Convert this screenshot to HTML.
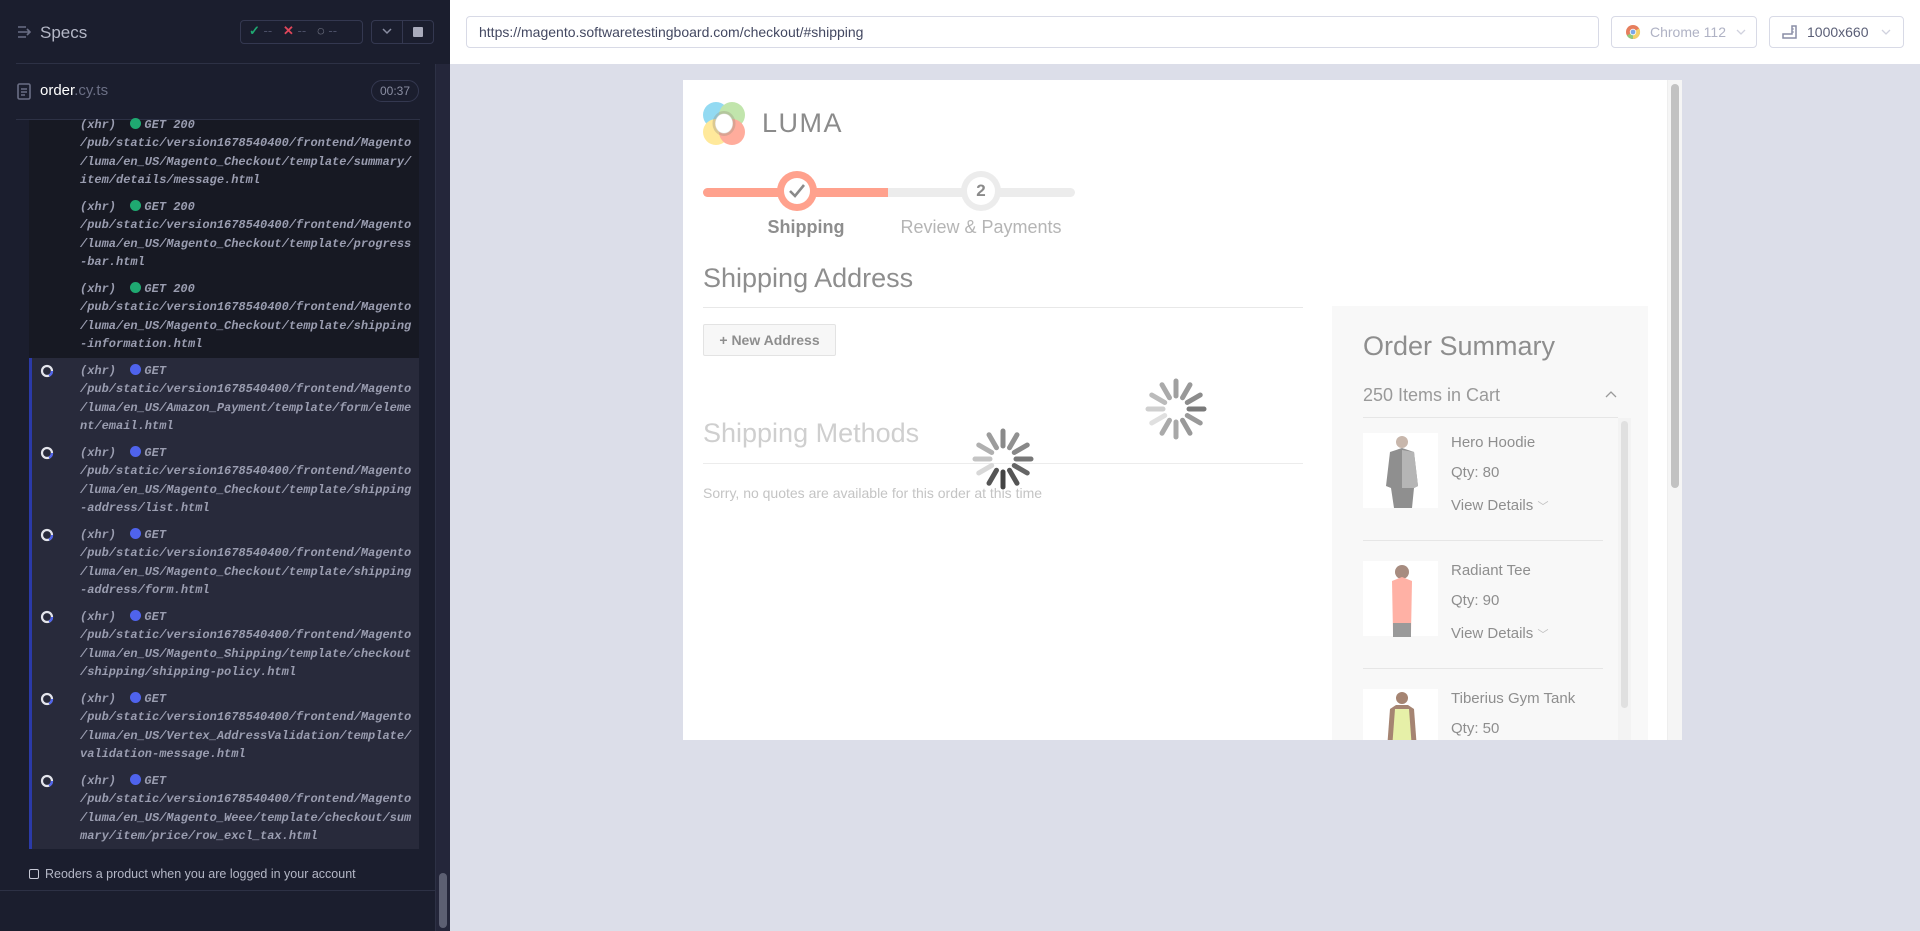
<!DOCTYPE html>
<html><head><meta charset="utf-8"><style>
*{box-sizing:border-box;margin:0;padding:0}
body{width:1920px;height:931px;overflow:hidden;background:#dcdee9;font-family:"Liberation Sans",sans-serif;position:relative}
.abs{position:absolute}
#side{left:0;top:0;width:450px;height:931px;background:#1b1e2e}
.mono{font-family:"Liberation Mono",monospace;font-weight:bold;font-style:italic;font-size:12px;color:#9a9db0;line-height:18.4px;white-space:pre}
.dot{display:inline-block;width:11px;height:11px;border-radius:50%;vertical-align:-1px;margin-right:3px}
.app{font-family:"Liberation Sans",sans-serif}
</style></head><body>
<div id="side" class="abs">
  <svg class="abs" style="left:17px;top:25px" width="15" height="14" viewBox="0 0 15 14"><path d="M1 2h8M1 7h6M1 12h8M10 4l3 3-3 3M6 7h7" stroke="#6b6f85" stroke-width="1.6" fill="none"/></svg>
  <div class="abs" style="left:40px;top:23px;font-size:17px;color:#b4b7c6">Specs</div>
  <div class="abs" style="left:240px;top:20px;width:123px;height:24px;border:1px solid #343850;border-radius:4px"></div>
  <div class="abs" style="left:249px;top:23px;font-size:13px;color:#4b4f66"><span style="color:#1fa971;font-weight:bold">✓</span> -- &nbsp;&nbsp;<span style="color:#e0465a;font-weight:bold">✕</span> -- &nbsp;&nbsp;<span style="color:#b4b7c6">◌</span> --</div>
  <div class="abs" style="left:371px;top:20px;width:63px;height:24px;border:1px solid #343850;border-radius:4px"></div>
  <div class="abs" style="left:402px;top:20px;width:1px;height:24px;background:#343850"></div>
  <svg class="abs" style="left:382px;top:28px" width="10" height="7"><path d="M1 1l4 4 4-4" stroke="#8a8ea2" stroke-width="1.5" fill="none"/></svg>
  <div class="abs" style="left:413px;top:27px;width:10px;height:10px;background:#a9abbb;border-radius:1px"></div>
  <div class="abs" style="left:16px;top:63px;width:404px;height:1px;background:#2d3145"></div>
  <svg class="abs" style="left:17px;top:83px" width="14" height="17"><rect x="1" y="1" width="12" height="15" rx="1.5" fill="none" stroke="#6b6f85" stroke-width="1.6"/><path d="M4 6h6M4 9h6M4 12h4" stroke="#6b6f85" stroke-width="1.4"/></svg>
  <div class="abs" style="left:40px;top:82px;font-size:15px;color:#fff">order<span style="color:#6b6f85">.cy.ts</span></div>
  <div class="abs" style="left:371px;top:80px;width:48px;height:22px;border:1px solid #343850;border-radius:11px;font-size:12px;color:#8a8ea2;text-align:center;line-height:20px">00:37</div>
  <div class="abs" style="left:16px;top:119px;width:404px;height:1px;background:#2d3145"></div>
  <div class="abs" style="left:29px;top:120px;width:390px;height:238px;background:#171923"></div>
  <div class="abs" style="left:29px;top:358px;width:390px;height:491px;background:#282a3b;border-left:3px solid #2b3aa8"></div>
  <div class="abs mono" style="left:80px;top:116px">(xhr)  <span class="dot" style="background:#1fa971"></span>GET 200
/pub/static/version1678540400/frontend/Magento
/luma/en_US/Magento_Checkout/template/summary/
item/details/message.html</div>
  <div class="abs mono" style="left:80px;top:198px">(xhr)  <span class="dot" style="background:#1fa971"></span>GET 200
/pub/static/version1678540400/frontend/Magento
/luma/en_US/Magento_Checkout/template/progress
-bar.html</div>
  <div class="abs mono" style="left:80px;top:280px">(xhr)  <span class="dot" style="background:#1fa971"></span>GET 200
/pub/static/version1678540400/frontend/Magento
/luma/en_US/Magento_Checkout/template/shipping
-information.html</div>
  <div class="abs mono" style="left:80px;top:362px">(xhr)  <span class="dot" style="background:#4f63ec"></span>GET
/pub/static/version1678540400/frontend/Magento
/luma/en_US/Amazon_Payment/template/form/eleme
nt/email.html</div>
  <div class="abs mono" style="left:80px;top:444px">(xhr)  <span class="dot" style="background:#4f63ec"></span>GET
/pub/static/version1678540400/frontend/Magento
/luma/en_US/Magento_Checkout/template/shipping
-address/list.html</div>
  <div class="abs mono" style="left:80px;top:526px">(xhr)  <span class="dot" style="background:#4f63ec"></span>GET
/pub/static/version1678540400/frontend/Magento
/luma/en_US/Magento_Checkout/template/shipping
-address/form.html</div>
  <div class="abs mono" style="left:80px;top:608px">(xhr)  <span class="dot" style="background:#4f63ec"></span>GET
/pub/static/version1678540400/frontend/Magento
/luma/en_US/Magento_Shipping/template/checkout
/shipping/shipping-policy.html</div>
  <div class="abs mono" style="left:80px;top:690px">(xhr)  <span class="dot" style="background:#4f63ec"></span>GET
/pub/static/version1678540400/frontend/Magento
/luma/en_US/Vertex_AddressValidation/template/
validation-message.html</div>
  <div class="abs mono" style="left:80px;top:772px">(xhr)  <span class="dot" style="background:#4f63ec"></span>GET
/pub/static/version1678540400/frontend/Magento
/luma/en_US/Magento_Weee/template/checkout/sum
mary/item/price/row_excl_tax.html</div>
  <svg class="abs" style="left:40px;top:364px" width="14" height="460">
    <g fill="none" stroke-width="2.2">
      <g><circle cx="7" cy="7" r="5" stroke="#e4e5ec"/><path d="M12 7a5 5 0 0 1-3 4.6" stroke="#4f63ec"/></g>
      <g transform="translate(0,82)"><circle cx="7" cy="7" r="5" stroke="#e4e5ec"/><path d="M12 7a5 5 0 0 1-3 4.6" stroke="#4f63ec"/></g>
      <g transform="translate(0,164)"><circle cx="7" cy="7" r="5" stroke="#e4e5ec"/><path d="M12 7a5 5 0 0 1-3 4.6" stroke="#4f63ec"/></g>
      <g transform="translate(0,246)"><circle cx="7" cy="7" r="5" stroke="#e4e5ec"/><path d="M12 7a5 5 0 0 1-3 4.6" stroke="#4f63ec"/></g>
      <g transform="translate(0,328)"><circle cx="7" cy="7" r="5" stroke="#e4e5ec"/><path d="M12 7a5 5 0 0 1-3 4.6" stroke="#4f63ec"/></g>
      <g transform="translate(0,410)"><circle cx="7" cy="7" r="5" stroke="#e4e5ec"/><path d="M12 7a5 5 0 0 1-3 4.6" stroke="#4f63ec"/></g>
    </g>
  </svg>
  <div class="abs" style="left:29px;top:869px;width:10px;height:10px;border:1.5px solid #c8cad6;border-radius:2px"></div>
  <div class="abs" style="left:45px;top:867px;font-size:12.5px;color:#b4b7c6">Reoders a product when you are logged in your account</div>
  <div class="abs" style="left:0;top:890px;width:435px;height:1px;background:#2d3145"></div>
  <div class="abs" style="left:435px;top:64px;width:15px;height:867px;background:#24263a;border-left:1px solid #2d3145"></div>
  <div class="abs" style="left:439px;top:873px;width:8px;height:55px;background:#5c5f72;border-radius:4px"></div>
</div>
<div class="abs" style="left:450px;top:0;width:1470px;height:64px;background:#fff"></div>
<div class="abs" style="left:466px;top:16px;width:1133px;height:32px;border:1px solid #d8dae6;border-radius:4px;font-size:14px;color:#434861;padding:7px 12px">https://magento.softwaretestingboard.com/checkout/#shipping</div>
<div class="abs" style="left:1611px;top:16px;width:146px;height:32px;border:1px solid #d8dae6;border-radius:4px;font-size:14px;color:#afb2c4;padding:7px 0 0 38px">Chrome 112</div>
<svg class="abs" style="left:1625px;top:24px" width="16" height="16" viewBox="0 0 16 16"><circle cx="8" cy="8" r="7" fill="#e67e5d"/><path d="M8 8L1.9 11.5A7 7 0 0 0 8 15z" fill="#8fc97b"/><path d="M8 8L8 15A7 7 0 0 0 14.1 4.5z" fill="#f3d06a"/><circle cx="8" cy="8" r="3.2" fill="#fff"/><circle cx="8" cy="8" r="2.4" fill="#7aa7e8"/></svg>
<svg class="abs" style="left:1736px;top:29px" width="10" height="7"><path d="M1 1l4 4 4-4" stroke="#d0d2de" stroke-width="1.3" fill="none"/></svg>
<div class="abs" style="left:1769px;top:16px;width:135px;height:32px;border:1px solid #d8dae6;border-radius:4px;font-size:14px;color:#5a5e76;padding:7px 0 0 37px">1000x660</div>
<svg class="abs" style="left:1782px;top:24px" width="16" height="16"><path d="M1 14h13V2h-4v8H1z" fill="none" stroke="#8a8ea6" stroke-width="1.5"/><path d="M10 5h2M10 8h2" stroke="#8a8ea6"/></svg>
<svg class="abs" style="left:1881px;top:29px" width="10" height="7"><path d="M1 1l4 4 4-4" stroke="#d0d2de" stroke-width="1.3" fill="none"/></svg>
<div class="abs app" style="left:683px;top:80px;width:999px;height:660px;background:#fff;overflow:hidden">
  <svg class="abs" style="left:19px;top:21px" width="44" height="45" viewBox="0 0 44 45"><g opacity=".55"><circle cx="14" cy="14" r="13" fill="#3cbde8"/><circle cx="30" cy="14" r="13" fill="#8fd06a"/><circle cx="14" cy="31" r="13" fill="#ffd84a"/><circle cx="30" cy="31" r="13" fill="#ff6a4d"/></g><ellipse cx="22" cy="22.5" rx="9" ry="10" fill="#fff"/><ellipse cx="22" cy="22.5" rx="10" ry="11" fill="none" stroke="#9a8f7f" stroke-width="3" opacity=".35"/></svg>
  <div class="abs" style="left:79px;top:28px;font-size:27px;color:#8b8b8b;letter-spacing:1.5px">LUMA</div>
  <div class="abs" style="left:20px;top:108px;width:372px;height:9px;background:#ececec;border-radius:5px"></div>
  <div class="abs" style="left:20px;top:108px;width:185px;height:9px;background:#ffa18d;border-radius:5px 0 0 5px"></div>
  <div class="abs" style="left:94px;top:91px;width:40px;height:40px;border-radius:50%;background:#ffa18d"></div>
  <div class="abs" style="left:101px;top:98px;width:26px;height:26px;border-radius:50%;background:#fff"></div>
  <svg class="abs" style="left:105px;top:103px" width="18" height="16"><path d="M2 8l5 5 9-11" stroke="#8a8a8a" stroke-width="2.6" fill="none"/></svg>
  <div class="abs" style="left:278px;top:91px;width:40px;height:40px;border-radius:50%;background:#ececec"></div>
  <div class="abs" style="left:284px;top:97px;width:28px;height:28px;border-radius:50%;background:#fff;font-size:17px;font-weight:bold;color:#8a8a8a;text-align:center;line-height:28px">2</div>
  <div class="abs" style="left:63px;top:137px;width:120px;text-align:center;font-size:18px;font-weight:bold;color:#8e8e8e">Shipping</div>
  <div class="abs" style="left:208px;top:137px;width:180px;text-align:center;font-size:18px;color:#b5b5b5;white-space:nowrap">Review &amp; Payments</div>
  <div class="abs" style="left:20px;top:183px;font-size:27px;color:#8e8e8e">Shipping Address</div>
  <div class="abs" style="left:20px;top:227px;width:600px;height:1px;background:#e8e8e8"></div>
  <div class="abs" style="left:20px;top:244px;width:133px;height:32px;border:1px solid #e3e3e3;background:#f7f7f7;border-radius:2px;font-size:14px;color:#8e8e8e;font-weight:bold;text-align:center;line-height:30px">+ New Address</div>
  <div class="abs" style="left:20px;top:338px;font-size:27px;color:#cfcfcf">Shipping Methods</div>
  <div class="abs" style="left:20px;top:383px;width:600px;height:1px;background:#ececec"></div>
  <div class="abs" style="left:20px;top:405px;font-size:14px;color:#c4c4c4">Sorry, no quotes are available for this order at this time</div>
  <div class="abs" style="left:649px;top:226px;width:316px;height:440px;background:#f8f8f8"></div>
  <div class="abs" style="left:680px;top:251px;font-size:27px;color:#8e8e8e">Order Summary</div>
  <div class="abs" style="left:680px;top:305px;font-size:18px;color:#9a9a9a">250 Items in Cart</div>
  <svg class="abs" style="left:922px;top:310px" width="12" height="8"><path d="M1 7l5-5 5 5" stroke="#9a9a9a" stroke-width="1.3" fill="none"/></svg>
  <div class="abs" style="left:680px;top:337px;width:255px;height:1px;background:#e6e6e6"></div>
  <div class="abs" style="left:935px;top:338px;width:13px;height:330px;background:#f3f3f3"></div>
  <div class="abs" style="left:938px;top:341px;width:7px;height:287px;background:#e0e0e0;border-radius:4px"></div>
  <div class="abs" style="left:680px;top:353px;width:75px;height:75px;background:#fff"></div>
  <svg class="abs" style="left:693px;top:354px" width="50" height="74"><circle cx="26" cy="8" r="6" fill="#c8b7ac"/><path d="M14 18l12-4 12 4 4 34-4 2-2 20H18l-3-20-5-2z" fill="#8f8f8f"/><path d="M26 16l12 2 4 34-4 2H26z" fill="#b5b5b5"/></svg>
  <div class="abs" style="left:768px;top:354px;font-size:15px;color:#8e8e8e">Hero Hoodie</div>
  <div class="abs" style="left:768px;top:384px;font-size:15px;color:#8e8e8e">Qty: 80</div>
  <div class="abs" style="left:768px;top:417px;font-size:15px;color:#8e8e8e">View Details <span style="color:#c0c0c0;font-size:11px">﹀</span></div>
  <div class="abs" style="left:680px;top:460px;width:240px;height:1px;background:#e6e6e6"></div>
  <div class="abs" style="left:680px;top:481px;width:75px;height:75px;background:#fff"></div>
  <svg class="abs" style="left:693px;top:483px" width="50" height="74"><circle cx="26" cy="9" r="7" fill="#a78c80"/><path d="M16 18l10-4 10 4-1 52H17z" fill="#ffb1a5"/><rect x="17" y="60" width="18" height="14" fill="#9a9a9a"/></svg>
  <div class="abs" style="left:768px;top:482px;font-size:15px;color:#8e8e8e">Radiant Tee</div>
  <div class="abs" style="left:768px;top:512px;font-size:15px;color:#8e8e8e">Qty: 90</div>
  <div class="abs" style="left:768px;top:545px;font-size:15px;color:#8e8e8e">View Details <span style="color:#c0c0c0;font-size:11px">﹀</span></div>
  <div class="abs" style="left:680px;top:588px;width:240px;height:1px;background:#e6e6e6"></div>
  <div class="abs" style="left:680px;top:609px;width:75px;height:75px;background:#fff"></div>
  <svg class="abs" style="left:693px;top:611px" width="50" height="60"><circle cx="26" cy="7" r="6" fill="#a58472"/><path d="M14 18l6-4h12l6 4 3 40H11z" fill="#a58472"/><path d="M19 18h14l3 40H16z" fill="#e6f0a8"/></svg>
  <div class="abs" style="left:768px;top:610px;font-size:15px;color:#8e8e8e">Tiberius Gym Tank</div>
  <div class="abs" style="left:768px;top:640px;font-size:15px;color:#8e8e8e">Qty: 50</div>
  <svg class="abs" style="left:288px;top:347px" width="64" height="64" viewBox="-32 -32 64 64">
    <g stroke-width="5" stroke-linecap="round">
      <line x1="0" y1="-13" x2="0" y2="-28" stroke="#8a8a8a"/>
      <line x1="0" y1="-13" x2="0" y2="-28" stroke="#919191" transform="rotate(30)"/>
      <line x1="0" y1="-13" x2="0" y2="-28" stroke="#888" transform="rotate(60)"/>
      <line x1="0" y1="-13" x2="0" y2="-28" stroke="#777" transform="rotate(90)"/>
      <line x1="0" y1="-13" x2="0" y2="-28" stroke="#666" transform="rotate(120)"/>
      <line x1="0" y1="-13" x2="0" y2="-28" stroke="#555" transform="rotate(150)"/>
      <line x1="0" y1="-13" x2="0" y2="-28" stroke="#444" transform="rotate(180)"/>
      <line x1="0" y1="-13" x2="0" y2="-28" stroke="#555" transform="rotate(210)"/>
      <line x1="0" y1="-13" x2="0" y2="-28" stroke="#d8d8d8" transform="rotate(240)"/>
      <line x1="0" y1="-13" x2="0" y2="-28" stroke="#c4c4c4" transform="rotate(270)"/>
      <line x1="0" y1="-13" x2="0" y2="-28" stroke="#b0b0b0" transform="rotate(300)"/>
      <line x1="0" y1="-13" x2="0" y2="-28" stroke="#9c9c9c" transform="rotate(330)"/>
    </g>
  </svg>
  <svg class="abs" style="left:461px;top:297px" width="64" height="64" viewBox="-32 -32 64 64">
    <g stroke-width="5" stroke-linecap="round">
      <line x1="0" y1="-13" x2="0" y2="-28" stroke="#a0a0a0"/>
      <line x1="0" y1="-13" x2="0" y2="-28" stroke="#999" transform="rotate(30)"/>
      <line x1="0" y1="-13" x2="0" y2="-28" stroke="#8c8c8c" transform="rotate(60)"/>
      <line x1="0" y1="-13" x2="0" y2="-28" stroke="#7a7a7a" transform="rotate(90)"/>
      <line x1="0" y1="-13" x2="0" y2="-28" stroke="#9a9a9a" transform="rotate(120)"/>
      <line x1="0" y1="-13" x2="0" y2="-28" stroke="#999" transform="rotate(150)"/>
      <line x1="0" y1="-13" x2="0" y2="-28" stroke="#a8a8a8" transform="rotate(180)"/>
      <line x1="0" y1="-13" x2="0" y2="-28" stroke="#aaa" transform="rotate(210)"/>
      <line x1="0" y1="-13" x2="0" y2="-28" stroke="#e0e0e0" transform="rotate(240)"/>
      <line x1="0" y1="-13" x2="0" y2="-28" stroke="#cfcfcf" transform="rotate(270)"/>
      <line x1="0" y1="-13" x2="0" y2="-28" stroke="#bbb" transform="rotate(300)"/>
      <line x1="0" y1="-13" x2="0" y2="-28" stroke="#aaa" transform="rotate(330)"/>
    </g>
  </svg>
  <div class="abs" style="left:984px;top:0;width:15px;height:660px;background:#f5f5f5;border-left:1px solid #eee"></div>
  <div class="abs" style="left:988px;top:4px;width:8px;height:404px;background:#c2c2c2;border-radius:4px"></div>
</div>
</body></html>
